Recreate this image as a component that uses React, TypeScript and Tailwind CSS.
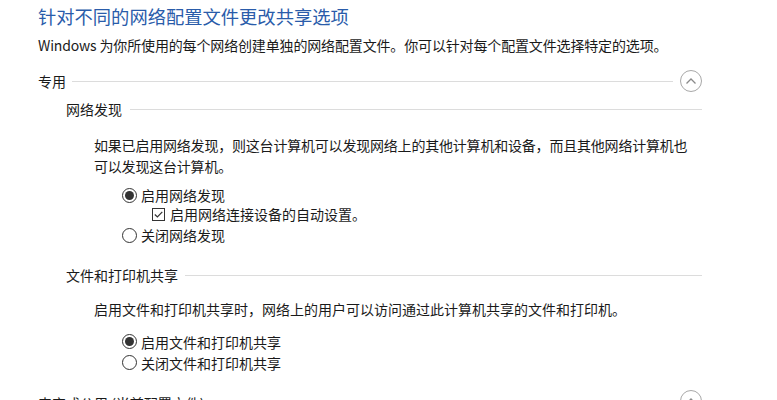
import React from "react";

const font = { fontFamily: '"Noto Sans CJK SC", "Noto Sans", sans-serif' };

function CollapseIcon() {
  return (
    <div className="w-[22px] h-[22px] rounded-full border border-[#a8a8a8] flex items-center justify-center shrink-0">
      <svg width="12" height="8" viewBox="0 0 12 8" fill="none">
        <path d="M1.5 6.5 L6 2 L10.5 6.5" stroke="#8a8a8a" strokeWidth="1.3" />
      </svg>
    </div>
  );
}

function Radio({ checked, label }: { checked?: boolean; label: string }) {
  return (
    <div className="flex items-center h-full">
      <div className="w-[15px] h-[15px] rounded-full border border-[#333] flex items-center justify-center shrink-0">
        {checked && <div className="w-[9px] h-[9px] rounded-full bg-[#333]" />}
      </div>
      <span className="ml-[4px] text-[14px] leading-[20px] text-[#1a1a1a]">{label}</span>
    </div>
  );
}

function Checkbox({ label }: { label: string }) {
  return (
    <div className="flex items-center h-full">
      <div className="w-[13px] h-[13px] border border-[#333] flex items-center justify-center shrink-0">
        <svg width="9" height="7" viewBox="0 0 9 7" fill="none">
          <path d="M0.8 3.5 L3.4 6 L8.3 0.8" stroke="#333" strokeWidth="1.2" />
        </svg>
      </div>
      <span className="ml-[5px] text-[14px] leading-[20px] text-[#1a1a1a]">{label}</span>
    </div>
  );
}

export default function App() {
  return (
    <div
      className="w-[777px] h-[400px] overflow-hidden bg-white pl-[38px] pt-[4px] text-[#1a1a1a]"
      style={font}
    >
      <div className="text-[18.3px] leading-[24px] text-[#2a5caa] whitespace-nowrap">
        针对不同的网络配置文件更改共享选项
      </div>
      <div className="mt-[7px] text-[14px] leading-[20px] whitespace-nowrap tracking-[-0.15px]">
        Windows 为你所使用的每个网络创建单独的网络配置文件。你可以针对每个配置文件选择特定的选项。
      </div>

      <div className="mt-[15px] w-[664px] h-[22px] flex items-center">
        <span className="text-[14px] leading-[20px]">专用</span>
        <div className="flex-1 h-[1px] bg-[#dcdcdc] ml-[6px] mr-[7px]" />
        <CollapseIcon />
      </div>

      <div className="mt-[7px] pl-[28px] w-[664px] h-[20px] flex items-center">
        <span className="text-[14px] leading-[20px]">网络发现</span>
        <div className="flex-1 h-[1px] bg-[#dcdcdc] ml-[8px]" />
      </div>

      <div className="mt-[16px] pl-[56px] text-[14px] leading-[21px] whitespace-nowrap tracking-[-0.2px]">
        如果已启用网络发现，则这台计算机可以发现网络上的其他计算机和设备，而且其他网络计算机也
        <br />
        可以发现这台计算机。
      </div>

      <div className="mt-[8px] pl-[84px] flex flex-col">
        <div className="h-[20px]">
          <Radio checked label="启用网络发现" />
        </div>
        <div className="h-[20px] -mt-[1px] pl-[30px]">
          <Checkbox label="启用网络连接设备的自动设置。" />
        </div>
        <div className="h-[20px] mt-[1px]">
          <Radio label="关闭网络发现" />
        </div>
      </div>

      <div className="mt-[20px] pl-[28px] w-[664px] h-[20px] flex items-center">
        <span className="text-[14px] leading-[20px]">文件和打印机共享</span>
        <div className="flex-1 h-[1px] bg-[#dcdcdc] ml-[7px]" />
      </div>

      <div className="mt-[14px] pl-[56px] text-[14px] leading-[21px] whitespace-nowrap">
        启用文件和打印机共享时，网络上的用户可以访问通过此计算机共享的文件和打印机。
      </div>

      <div className="mt-[11px] pl-[84px] flex flex-col">
        <div className="h-[21px]">
          <Radio checked label="启用文件和打印机共享" />
        </div>
        <div className="h-[21px]">
          <Radio label="关闭文件和打印机共享" />
        </div>
      </div>

      <div className="mt-[17px] w-[664px] h-[22px] flex items-center">
        <span className="text-[14px] leading-[20px] pt-[4px]">来宾或公用 (当前配置文件)</span>
        <div className="flex-1 h-[1px] bg-[#dcdcdc] ml-[6px] mr-[7px]" />
        <CollapseIcon />
      </div>
    </div>
  );
}
